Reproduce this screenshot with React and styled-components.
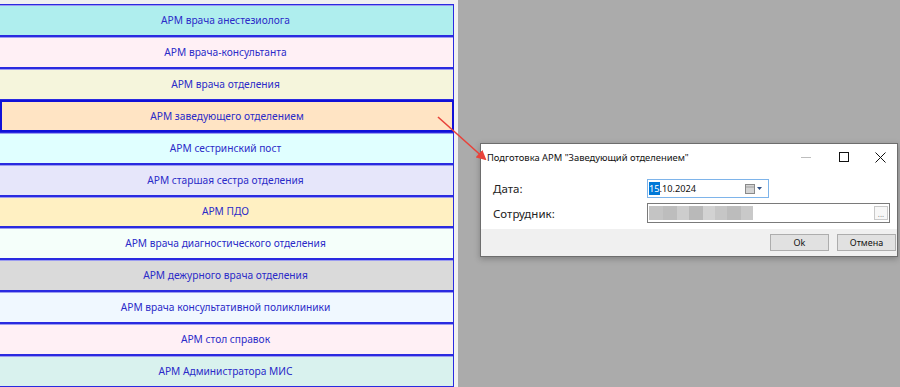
import React from "react";
import styled, { createGlobalStyle } from "styled-components";

const GlobalStyle = createGlobalStyle`
  html, body {
    margin: 0;
    padding: 0;
    background: #ababab;
    font-family: "Noto Sans", "Open Sans", sans-serif;
  }
  #root {
    height: 387px;
    overflow: hidden;
  }
`;

const workplaces = [
  { title: "АРМ врача анестезиолога", bg: "#afeeee" },
  { title: "АРМ врача-консультанта", bg: "#fff0f5" },
  { title: "АРМ врача отделения", bg: "#f5f5dc" },
  { title: "АРМ заведующего отделением", bg: "#ffe4c4", selected: true },
  { title: "АРМ сестринский пост", bg: "#e0ffff" },
  { title: "АРМ старшая сестра отделения", bg: "#e6e6fa" },
  { title: "АРМ ПДО", bg: "#fff0c2" },
  { title: "АРМ врача диагностического отделения", bg: "#f5fffa" },
  { title: "АРМ дежурного врача отделения", bg: "#dadada" },
  { title: "АРМ врача консультативной поликлиники", bg: "#f0f8ff" },
  { title: "АРМ стол справок", bg: "#fff0f5" },
  { title: "АРМ Администратора МИС", bg: "#d9f2ee" },
];

const blurBlocks = [
  { w: 14, c: "#c4c4c4" },
  { w: 14, c: "#bdbdbd" },
  { w: 12, c: "#cdcdcd" },
  { w: 14, c: "#b9b9b9" },
  { w: 12, c: "#d2d2d2" },
  { w: 12, c: "#c6c6c6" },
  { w: 14, c: "#bcbcbc" },
  { w: 12, c: "#c9c9c9" },
];

export default function App() {
  return (
    <>
      <GlobalStyle />
      <Screen>
        <ListPanel>
          {workplaces.map((w) => (
            <WorkplaceButton key={w.title} $bg={w.bg} $selected={w.selected}>
              {w.title}
            </WorkplaceButton>
          ))}
        </ListPanel>
        <Desktop>
          <Dialog>
            <TitleBar>
              <Title>Подготовка АРМ "Заведующий отделением"</Title>
              <WindowButtons>
                <WinButton>
                  <svg width="10" height="10" viewBox="0 0 10 10">
                    <path d="M0 5.5h10" stroke="#bdbdbd" strokeWidth="1" />
                  </svg>
                </WinButton>
                <WinButton>
                  <svg width="10" height="10" viewBox="0 0 10 10">
                    <rect x="0.5" y="0.5" width="9" height="9" fill="none" stroke="#111" strokeWidth="1" />
                  </svg>
                </WinButton>
                <WinButton>
                  <svg width="11" height="11" viewBox="0 0 11 11">
                    <path d="M0.5 0.5l10 10M10.5 0.5l-10 10" stroke="#111" strokeWidth="1" />
                  </svg>
                </WinButton>
              </WindowButtons>
            </TitleBar>
            <DialogBody>
              <FieldRow>
                <Label>Дата:</Label>
                <DateInput>
                  <DateText>
                    <Selected>15</Selected>.10.2024
                  </DateText>
                  <svg width="18" height="10" viewBox="0 0 18 10">
                    <rect x="0.5" y="0.5" width="9" height="9" fill="#d4d4d4" stroke="#8a8a8a" />
                    <path d="M1 3h8" stroke="#a0a0a0" />
                    <path d="M12 3h5l-2.5 3z" fill="#2d4f86" />
                  </svg>
                </DateInput>
              </FieldRow>
              <FieldRow>
                <Label>Сотрудник:</Label>
                <EmployeeInput>
                  <Blur>
                    {blurBlocks.map((b, i) => (
                      <BlurBlock key={i} style={{ width: b.w, background: b.c }} />
                    ))}
                  </Blur>
                  <DotsButton>...</DotsButton>
                </EmployeeInput>
              </FieldRow>
            </DialogBody>
            <Footer>
              <DialogButton>Ok</DialogButton>
              <DialogButton>Отмена</DialogButton>
            </Footer>
          </Dialog>
        </Desktop>
        <Arrow width="900" height="387" viewBox="0 0 900 387">
          <defs>
            <marker id="head" markerWidth="10" markerHeight="10" refX="8" refY="5" orient="auto" markerUnits="userSpaceOnUse">
              <path d="M0 0L10 5L0 10z" fill="#e8423a" />
            </marker>
          </defs>
          <line x1="438" y1="117" x2="485" y2="159" stroke="#e8423a" strokeWidth="1.6" markerEnd="url(#head)" />
        </Arrow>
      </Screen>
    </>
  );
}

const Screen = styled.div`
  position: relative;
  display: flex;
  width: 900px;
  height: 387px;
  background: #ababab;
  overflow: hidden;
`;

const ListPanel = styled.div`
  display: flex;
  flex-direction: column;
  width: 454px;
  padding: 4px 4px 0 0;
  background: #f0f0f0;
  flex-shrink: 0;
`;

const WorkplaceButton = styled.div`
  display: flex;
  align-items: center;
  justify-content: center;
  height: 32px;
  box-sizing: border-box;
  margin-left: ${(p) => (p.$selected ? "0" : "-2px")};
  background: ${(p) => p.$bg};
  border: ${(p) => (p.$selected ? "2px solid #1010d8" : "1px solid #2a2ae0")};
  border-width: ${(p) => (p.$selected ? "2px" : "1px 1px 1px 0")};
  box-shadow: ${(p) => (p.$selected ? "none" : "inset 0 1px 0 #9c9cf0")};
  color: #2b2bc8;
  font-size: 10.2px;
  white-space: nowrap;
`;

const Desktop = styled.div`
  flex: 1;
  padding: 143px 0 0 22px;
`;

const Dialog = styled.div`
  width: 418px;
  height: 114px;
  box-sizing: border-box;
  background: #fff;
  border: 1px solid #6d6d6d;
  display: flex;
  flex-direction: column;
  box-shadow: 0 2px 6px rgba(0, 0, 0, 0.25);
`;

const TitleBar = styled.div`
  display: flex;
  align-items: center;
  height: 26px;
  padding-left: 6px;
`;

const Title = styled.div`
  flex: 1;
  font-size: 9.4px;
  color: #111;
  white-space: nowrap;
`;

const WindowButtons = styled.div`
  display: flex;
  height: 100%;
`;

const WinButton = styled.div`
  width: 38px;
  display: flex;
  align-items: center;
  justify-content: center;

  &:last-child {
    width: 34px;
  }
`;

const DialogBody = styled.div`
  flex: 1;
  display: flex;
  flex-direction: column;
  gap: 5px;
  padding: 9px 0 0 12px;
`;

const FieldRow = styled.div`
  display: flex;
  align-items: center;
`;

const Label = styled.div`
  width: 154px;
  font-size: 11.5px;
  color: #222;
`;

const DateInput = styled.div`
  width: 122px;
  height: 19px;
  box-sizing: border-box;
  border: 1px solid #7eb4ea;
  display: flex;
  align-items: center;
  justify-content: space-between;
  padding: 0 5px 0 1px;
`;

const DateText = styled.div`
  font-size: 9.2px;
  color: #111;
  line-height: 13px;
`;

const Selected = styled.span`
  background: #0078d7;
  color: #fff;
`;

const EmployeeInput = styled.div`
  width: 243px;
  height: 20px;
  box-sizing: border-box;
  border: 1px solid #7a7a7a;
  display: flex;
  align-items: center;
  justify-content: space-between;
  padding: 0 1px 0 1px;
`;

const Blur = styled.div`
  display: flex;
  height: 14px;
`;

const BlurBlock = styled.div`
  height: 100%;
`;

const DotsButton = styled.div`
  width: 14px;
  height: 14px;
  box-sizing: border-box;
  border: 1px solid #c8c8c8;
  background: #f7f7f7;
  color: #888;
  font-size: 8px;
  display: flex;
  align-items: flex-end;
  justify-content: center;
  line-height: 10px;
`;

const Footer = styled.div`
  height: 27px;
  background: #f0f0f0;
  display: flex;
  align-items: center;
  justify-content: flex-end;
  gap: 8px;
  padding-right: 1px;
`;

const DialogButton = styled.div`
  width: 59px;
  height: 17px;
  box-sizing: border-box;
  border: 1px solid #adadad;
  background: #e1e1e1;
  font-size: 9px;
  color: #111;
  display: flex;
  align-items: center;
  justify-content: center;
`;

const Arrow = styled.svg`
  position: absolute;
  left: 0;
  top: 0;
  pointer-events: none;
`;
